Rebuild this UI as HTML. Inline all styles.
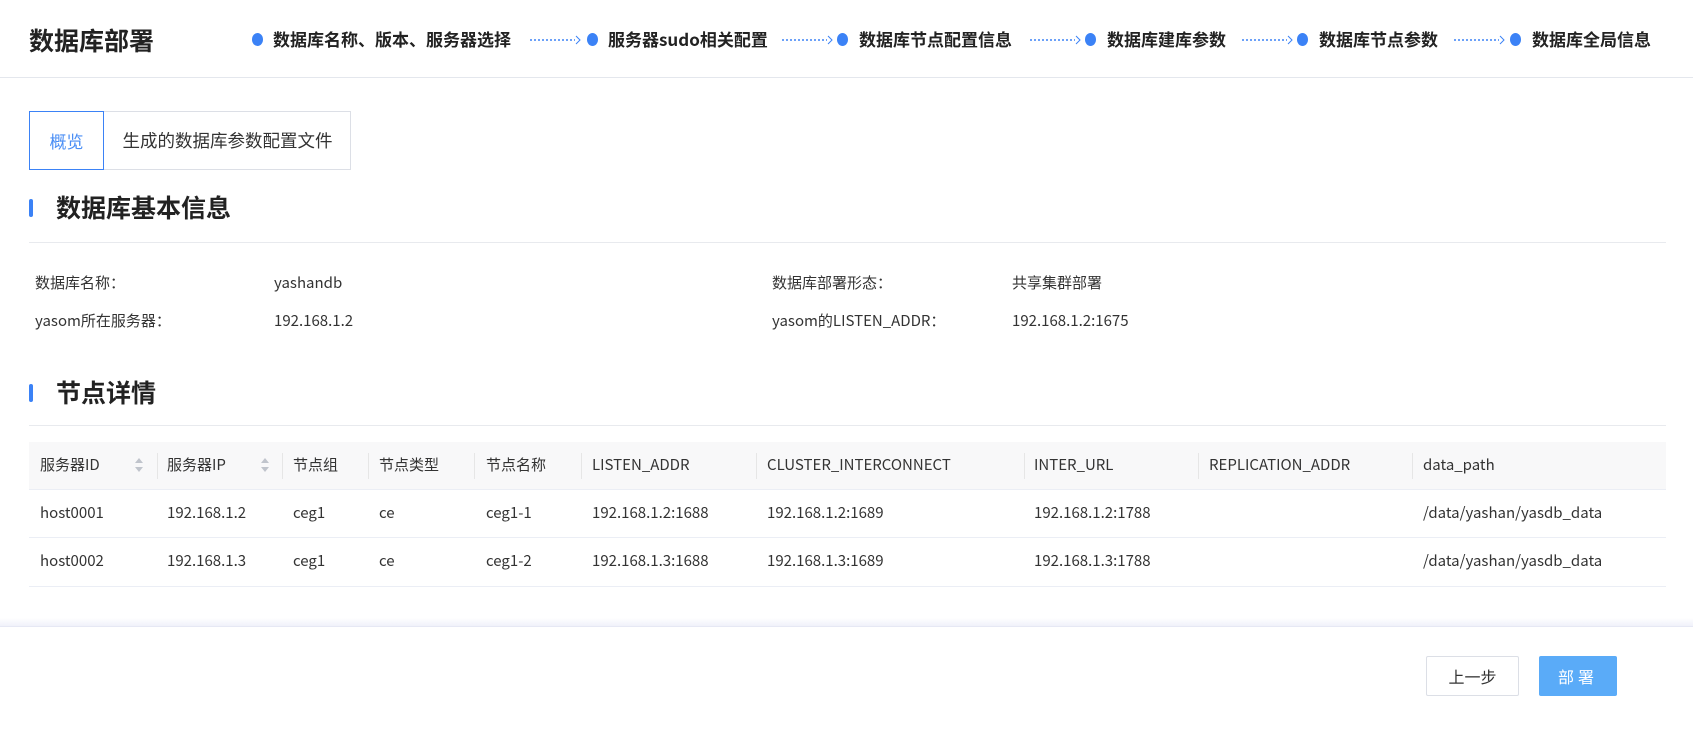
<!DOCTYPE html>
<html><head><meta charset="utf-8"><style>
*{margin:0;padding:0;box-sizing:border-box}
body{width:1693px;height:730px;background:#fff;font-family:"Noto Sans CJK SC","Liberation Sans",sans-serif;color:#333;position:relative;overflow:hidden;font-size:15px}
.a{position:absolute;white-space:nowrap;line-height:1.2}
.title{left:29px;top:25px;font-size:25px;font-weight:bold;color:#222}
.hline{left:0;top:77px;width:1693px;height:1px;background:#e4e7ed}
.dot{width:11px;height:13px;border-radius:50%;background:#3b82f6;top:33px}
.st{font-size:17px;font-weight:bold;color:#222;top:29px}
.arr{top:35px;height:10px}
.tabs{left:29px;top:111px;width:322px;height:59px;border:1px solid #dcdfe6}
.tab1{left:29px;top:111px;width:75px;height:59px;border:1px solid #3b82f6;color:#4a8ef5;text-align:center;line-height:57px;font-size:17px}
.tab2{left:104px;top:111px;width:247px;text-align:center;line-height:59px;font-size:17.5px;color:#333}
.bar{left:29px;width:4px;height:18px;background:#3b82f6;border-radius:2px}
.sec{left:56px;font-size:25px;font-weight:bold;color:#222}
.line{left:29px;width:1637px;height:1px;background:#e8eaee}
.th{left:29px;top:442px;width:1637px;height:47px;background:#f8f8f9}
.sep{width:1px;height:26px;background:#e6e6e6;top:453px}
.cell{font-size:15px;color:#333}
.btn{top:656px;height:40px;line-height:38px;text-align:center;font-size:16px;border-radius:2px}
</style></head><body>
<div class="a title">数据库部署</div>
<div class="a hline"></div>

<div class="a dot" style="left:252px"></div><div class="a st" style="left:273px">数据库名称、版本、服务器选择</div>
<svg class="a arr" style="left:530px" width="52" height="10"><line x1="0" y1="5" x2="45" y2="5" stroke="#3b82f6" stroke-width="1.5" stroke-dasharray="2,2"/><path d="M46 1 L50 5 L46 9" fill="none" stroke="#3b82f6"/></svg>
<div class="a dot" style="left:587px"></div><div class="a st" style="left:608px">服务器sudo相关配置</div>
<svg class="a arr" style="left:782px" width="52" height="10"><line x1="0" y1="5" x2="45" y2="5" stroke="#3b82f6" stroke-width="1.5" stroke-dasharray="2,2"/><path d="M46 1 L50 5 L46 9" fill="none" stroke="#3b82f6"/></svg>
<div class="a dot" style="left:837px"></div><div class="a st" style="left:859px">数据库节点配置信息</div>
<svg class="a arr" style="left:1030px" width="52" height="10"><line x1="0" y1="5" x2="45" y2="5" stroke="#3b82f6" stroke-width="1.5" stroke-dasharray="2,2"/><path d="M46 1 L50 5 L46 9" fill="none" stroke="#3b82f6"/></svg>
<div class="a dot" style="left:1085px"></div><div class="a st" style="left:1107px">数据库建库参数</div>
<svg class="a arr" style="left:1242px" width="52" height="10"><line x1="0" y1="5" x2="45" y2="5" stroke="#3b82f6" stroke-width="1.5" stroke-dasharray="2,2"/><path d="M46 1 L50 5 L46 9" fill="none" stroke="#3b82f6"/></svg>
<div class="a dot" style="left:1297px"></div><div class="a st" style="left:1319px">数据库节点参数</div>
<svg class="a arr" style="left:1454px" width="52" height="10"><line x1="0" y1="5" x2="45" y2="5" stroke="#3b82f6" stroke-width="1.5" stroke-dasharray="2,2"/><path d="M46 1 L50 5 L46 9" fill="none" stroke="#3b82f6"/></svg>
<div class="a dot" style="left:1510px"></div><div class="a st" style="left:1532px">数据库全局信息</div>

<div class="a tabs"></div>
<div class="a tab1">概览</div>
<div class="a tab2">生成的数据库参数配置文件</div>

<div class="a bar" style="top:199px"></div>
<div class="a sec" style="top:192px">数据库基本信息</div>
<div class="a line" style="top:242px"></div>

<div class="a cell" style="left:35px;top:274px">数据库名称：</div>
<div class="a cell" style="left:274px;top:274px">yashandb</div>
<div class="a cell" style="left:772px;top:274px">数据库部署形态：</div>
<div class="a cell" style="left:1012px;top:274px">共享集群部署</div>
<div class="a cell" style="left:35px;top:312px">yasom所在服务器：</div>
<div class="a cell" style="left:274px;top:312px">192.168.1.2</div>
<div class="a cell" style="left:772px;top:312px">yasom的LISTEN_ADDR：</div>
<div class="a cell" style="left:1012px;top:312px">192.168.1.2:1675</div>

<div class="a bar" style="top:384px"></div>
<div class="a sec" style="top:377px">节点详情</div>
<div class="a line" style="top:425px"></div>

<div class="a th"></div>
<div class="a sep" style="left:157px"></div><div class="a sep" style="left:282px"></div><div class="a sep" style="left:368px"></div><div class="a sep" style="left:474px"></div><div class="a sep" style="left:581px"></div><div class="a sep" style="left:756px"></div><div class="a sep" style="left:1024px"></div><div class="a sep" style="left:1198px"></div><div class="a sep" style="left:1412px"></div>
<svg class="a" style="left:134px;top:456px" width="10" height="18"><path d="M1 7 L5 2 L9 7Z M1 11 L5 16 L9 11Z" fill="#c0c4cc"/></svg>
<svg class="a" style="left:260px;top:456px" width="10" height="18"><path d="M1 7 L5 2 L9 7Z M1 11 L5 16 L9 11Z" fill="#c0c4cc"/></svg>
<div class="a cell" style="left:40px;top:456px">服务器ID</div>
<div class="a cell" style="left:167px;top:456px">服务器IP</div>
<div class="a cell" style="left:293px;top:456px">节点组</div>
<div class="a cell" style="left:379px;top:456px">节点类型</div>
<div class="a cell" style="left:486px;top:456px">节点名称</div>
<div class="a cell" style="left:592px;top:456px">LISTEN_ADDR</div>
<div class="a cell" style="left:767px;top:456px">CLUSTER_INTERCONNECT</div>
<div class="a cell" style="left:1034px;top:456px">INTER_URL</div>
<div class="a cell" style="left:1209px;top:456px">REPLICATION_ADDR</div>
<div class="a cell" style="left:1423px;top:456px">data_path</div>
<div class="a line" style="top:489px;background:#ebeef5"></div>

<div class="a cell" style="left:40px;top:504px">host0001</div>
<div class="a cell" style="left:167px;top:504px">192.168.1.2</div>
<div class="a cell" style="left:293px;top:504px">ceg1</div>
<div class="a cell" style="left:379px;top:504px">ce</div>
<div class="a cell" style="left:486px;top:504px">ceg1-1</div>
<div class="a cell" style="left:592px;top:504px">192.168.1.2:1688</div>
<div class="a cell" style="left:767px;top:504px">192.168.1.2:1689</div>
<div class="a cell" style="left:1034px;top:504px">192.168.1.2:1788</div>
<div class="a cell" style="left:1423px;top:504px">/data/yashan/yasdb_data</div>
<div class="a line" style="top:537px;background:#ebeef5"></div>

<div class="a cell" style="left:40px;top:552px">host0002</div>
<div class="a cell" style="left:167px;top:552px">192.168.1.3</div>
<div class="a cell" style="left:293px;top:552px">ceg1</div>
<div class="a cell" style="left:379px;top:552px">ce</div>
<div class="a cell" style="left:486px;top:552px">ceg1-2</div>
<div class="a cell" style="left:592px;top:552px">192.168.1.3:1688</div>
<div class="a cell" style="left:767px;top:552px">192.168.1.3:1689</div>
<div class="a cell" style="left:1034px;top:552px">192.168.1.3:1788</div>
<div class="a cell" style="left:1423px;top:552px">/data/yashan/yasdb_data</div>
<div class="a line" style="top:586px;background:#ebeef5"></div>

<div class="a" style="left:0;top:618px;width:1693px;height:8px;background:linear-gradient(#fff,#f0f1fa)"></div>
<div class="a" style="left:0;top:626px;width:1693px;height:1px;background:#e6e8f4"></div>

<div class="a btn" style="left:1426px;width:93px;border:1px solid #dcdfe6;color:#333;background:#fff;line-height:38px">上一步</div>
<div class="a btn" style="left:1539px;width:78px;background:#5aabf8;color:#fff;letter-spacing:4px;line-height:40px">部署</div>
</body></html>
